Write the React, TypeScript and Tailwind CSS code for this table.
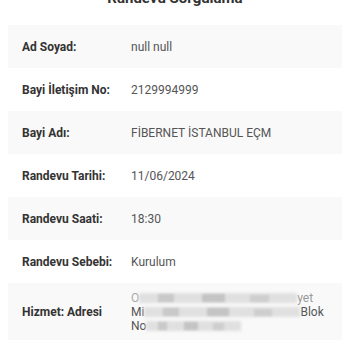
const rows: { label: string; value: string }[] = [
  { label: 'Ad Soyad:', value: 'null null' },
  { label: 'Bayi İletişim No:', value: '2129994999' },
  { label: 'Bayi Adı:', value: 'FİBERNET İSTANBUL EÇM' },
  { label: 'Randevu Tarihi:', value: '11/06/2024' },
  { label: 'Randevu Saati:', value: '18:30' },
  { label: 'Randevu Sebebi:', value: 'Kurulum' },
];

function Smudge({ w }: { w: string }) {
  return (
    <span className={`relative inline-block h-[10px] align-middle ${w}`}>
      <span className="absolute inset-0 bg-[#e0e0e0] blur-[1.5px]" />
      <span className="absolute left-[12%] top-[1px] h-[8px] w-[10%] bg-[#c9c9c9] blur-[1px]" />
      <span className="absolute left-[40%] top-[1px] h-[8px] w-[14%] bg-[#c4c4c4] blur-[1px]" />
      <span className="absolute left-[70%] top-[2px] h-[7px] w-[12%] bg-[#cecece] blur-[1px]" />
    </span>
  );
}

export default function App() {
  return (
    <div className="h-[350px] w-[350px] overflow-hidden bg-white font-['Roboto',sans-serif]">
      <div className="-mt-[9px] h-[34px] text-center text-[15px] font-bold leading-[15px] text-[#333]">
        Randevu Sorgulama
      </div>
      <div className="mx-2">
        {rows.map((r, i) => (
          <div
            key={r.label}
            className={`flex h-[43px] items-center px-[14px] pt-[1px] text-[12px] ${i % 2 === 0 ? 'bg-[#f9f9f9]' : 'bg-white'}`}
          >
            <div className="w-[109px] shrink-0 font-bold text-[#333]">{r.label}</div>
            <div className="text-[#555]">{r.value}</div>
          </div>
        ))}
        <div className="flex h-[57px] items-center bg-[#f9f9f9] px-[14px] text-[12px]">
          <div className="w-[109px] shrink-0 font-bold text-[#333]">Hizmet: Adresi</div>
          <div className="whitespace-nowrap leading-[14px] text-[#555]">
            <div className="flex items-center">
              <span className="text-[#aaa]">O</span>
              <Smudge w="w-[158px]" />
              <span className="text-[#999]">yet</span>
            </div>
            <div className="flex items-center">
              Mi
              <Smudge w="w-[156px]" />
              Blok
            </div>
            <div className="flex items-center">
              No
              <Smudge w="w-[95px]" />
            </div>
          </div>
        </div>
      </div>
    </div>
  );
}
